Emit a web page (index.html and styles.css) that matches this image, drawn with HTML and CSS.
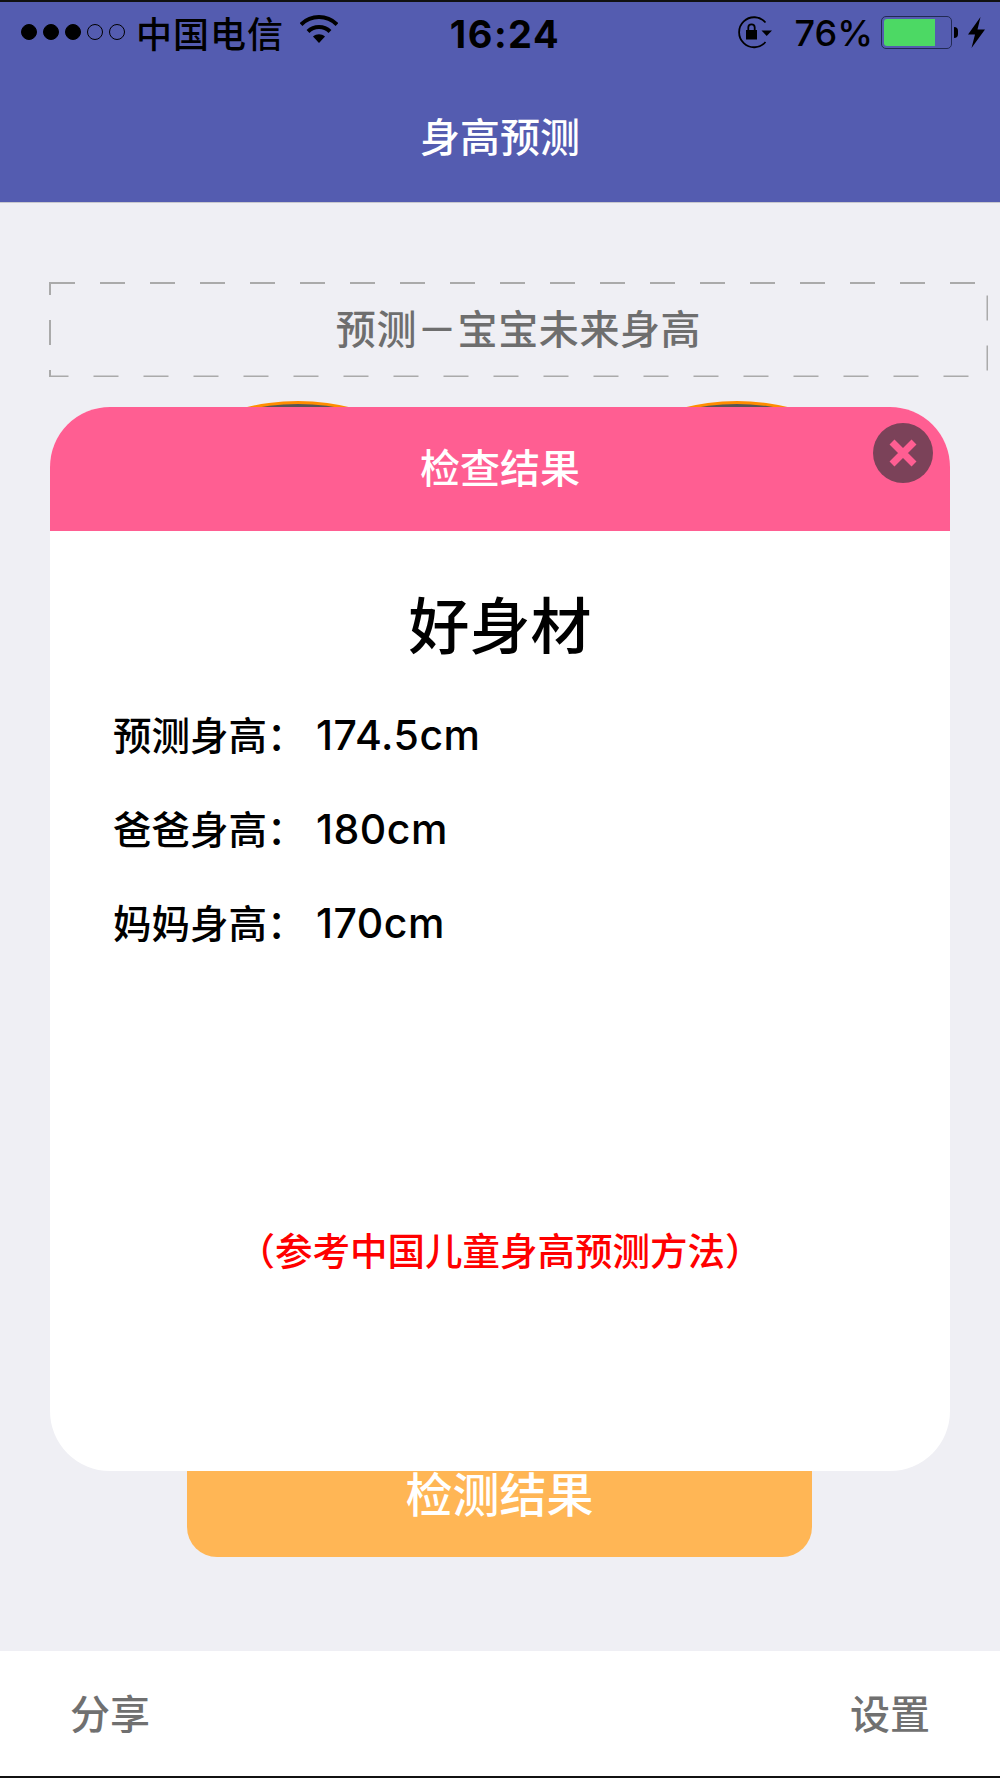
FILE: index.html
```html
<!DOCTYPE html>
<html lang="zh-CN">
<head>
    <meta charset="UTF-8">
    <meta name="viewport" content="width=device-width, initial-scale=1.0">
    <title>身高预测</title>
    <link rel="stylesheet" href="styles.css">
</head>
<body>

<div class="page">
    <div class="topbar">
        <div class="status">
            <div class="status-left">
                <span class="dot on"></span>
                <span class="dot on"></span>
                <span class="dot on"></span>
                <span class="dot"></span>
                <span class="dot"></span>
                <span class="carrier">中国电信</span>
                <svg class="wifi" width="38" height="28" viewBox="0 0 38 28">
                    <path d="M1 9.500C11 -0.500 27 -0.500 37 9.500" fill="none" stroke="#000" stroke-width="4"/>
                    <path d="M8 16.500C14 10.500 24 10.500 30 16.500" fill="none" stroke="#000" stroke-width="4"/>
                    <path d="M13 21.500C16.500 18.500 21.500 18.500 25 21.500L19 28Z" fill="#000"/>
                </svg>
            </div>
            <div class="clock">16:24</div>
            <div class="status-right">
                <svg class="lock" width="37" height="33" viewBox="0 0 37 33">
                    <path d="M29.500 6.500A15 15 0 1 0 29.500 26" fill="none" stroke="#000" stroke-width="1.800"/>
                    <path d="M25.500 14.500H36L30.700 20Z" fill="#000"/>
                    <path d="M10 14H21V23.500H10Z" fill="#000"/>
                    <path d="M12.300 14V11.500A3.200 3.200 0 0 1 18.700 11.500V14" fill="none" stroke="#000" stroke-width="1.800"/>
                </svg>
                <span class="percent">76%</span>
                <div class="battery"><div class="battery-fill"></div></div>
                <span class="battery-nub"></span>
                <svg class="bolt" width="17" height="31" viewBox="0 0 17 31">
                    <path d="M12.500 0L0 17.500H7L3.500 31L17 12.500H9.500Z" fill="#000"/>
                </svg>
            </div>
        </div>
        <h1>身高预测</h1>
    </div>

    <div class="main">
        <div class="banner">
            <svg class="banner-line" width="939" height="95">
                <rect x="1" y="1" width="937.500" height="93.500" fill="none" stroke="#aaa" stroke-width="2" stroke-dasharray="25 25"/>
            </svg>
            预测－宝宝未来身高
        </div>
        <div class="avatars">
            <div class="avatar"></div>
            <div class="avatar"></div>
        </div>
        <div class="check-btn">检测结果</div>
    </div>

    <div class="footer">
        <span>分享</span>
        <span>设置</span>
    </div>

    <div class="modal">
        <div class="modal-head">
            检查结果
            <div class="modal-close">
                <svg width="30" height="30" viewBox="0 0 30 30">
                    <path d="M4 4L26 26M26 4L4 26" stroke="#ff5e92" stroke-width="7"/>
                </svg>
            </div>
        </div>
        <div class="modal-body">
            <div class="result-title">好身材</div>
            <div class="rows">
                <div class="row"><span class="label">预测身高：</span><span class="num">174.5cm</span></div>
                <div class="row"><span class="label">爸爸身高：</span><span class="num">180cm</span></div>
                <div class="row"><span class="label">妈妈身高：</span><span class="num">170cm</span></div>
            </div>
            <div class="note">（参考中国儿童身高预测方法）</div>
        </div>
    </div>
</div>

</body>
</html>
```

FILE: styles.css
```css
/* Basic styling for the page */
body {
    margin: 0;
    font-family: "Noto Sans CJK SC", "Liberation Sans", sans-serif;
    background-color: #efeff4;
}
.page {
    position: relative;
    width: 1000px;
    height: 1778px;
    display: flex;
    flex-direction: column;
    overflow: hidden;
    background-color: #efeff4;
    border-top: 2px solid #111;
    border-bottom: 2px solid #111;
    box-sizing: border-box;
}

/* Top bar */
.topbar {
    height: 200px;
    background-color: #545cb0;
    border-bottom: 1px solid #c8c8ce;
    flex: none;
}
.status {
    display: grid;
    grid-template-columns: 1fr auto 1fr;
    align-items: center;
    height: 60px;
    color: #000;
}
.status-left {
    display: flex;
    align-items: center;
    padding-left: 21px;
}
.dot {
    width: 14px;
    height: 14px;
    margin-right: 6px;
    border: 1px solid #000;
    border-radius: 50%;
}
.dot.on {
    background-color: #000;
}
.carrier {
    margin-left: 5px;
    font-size: 36px;
    font-weight: 500;
    line-height: 44px;
    letter-spacing: 1px;
}
.wifi {
    margin-left: 16px;
    margin-top: -6px;
}
.clock {
    margin-left: 10px;
    margin-top: 3px;
    font-family: Inter, "Liberation Sans", sans-serif;
    font-size: 38px;
    font-weight: 700;
    letter-spacing: 1.500px;
}
.status-right {
    display: flex;
    align-items: center;
    justify-content: flex-end;
    padding-right: 15px;
}
.lock {
    margin-right: 22px;
}
.percent {
    margin-top: 2px;
    margin-right: 8px;
    font-family: Inter, "Liberation Sans", sans-serif;
    font-size: 36px;
    font-weight: 500;
}
.battery {
    width: 65px;
    height: 27px;
    padding: 2px;
    border: 1px solid #222a55;
    border-radius: 5px;
}
.battery-fill {
    width: 51px;
    height: 100%;
    background-color: #4cd964;
    border-radius: 3px 0 0 3px;
}
.battery-nub {
    width: 4px;
    height: 11px;
    margin-left: 2px;
    background-color: #000;
    border-radius: 0 4px 4px 0;
}
.bolt {
    margin-left: 10px;
}
h1 {
    margin: 0;
    height: 140px;
    color: #fff;
    font-size: 40px;
    font-weight: 500;
    line-height: 146px;
    text-align: center;
}

/* Page behind the dialog */
.main {
    flex: 1;
    padding-top: 79px;
}
.banner {
    position: relative;
    width: 939px;
    height: 95px;
    margin-left: 49px;
    color: #6e6e6e;
    font-size: 40px;
    font-weight: 500;
    letter-spacing: 0.600px;
    line-height: 91px;
    text-align: center;
}
.banner-line {
    position: absolute;
    top: 0;
    left: 0;
}
.avatars {
    display: flex;
    gap: 139px;
    margin-top: 24px;
    padding-left: 148px;
}
.avatar {
    width: 300px;
    height: 200px;
    box-sizing: border-box;
    background-color: #555;
    border: 3px solid #ff8c00;
    border-radius: 50%;
}
.check-btn {
    width: 625px;
    height: 124px;
    margin-top: 832px;
    margin-left: 187px;
    background-color: #ffb655;
    border-radius: 0 0 30px 30px;
    color: #fff;
    font-size: 47px;
    font-weight: 500;
    line-height: 118px;
    text-align: center;
}

/* Bottom bar */
.footer {
    flex: none;
    display: flex;
    justify-content: space-between;
    align-items: center;
    height: 125px;
    padding: 0 70px 4px;
    box-sizing: border-box;
    background-color: #fff;
    color: #707070;
    font-size: 40px;
    font-weight: 500;
}

/* Dialog */
.modal {
    position: absolute;
    top: 405px;
    left: 50px;
    width: 900px;
    height: 1064px;
    background-color: #fff;
    border-radius: 60px;
    overflow: hidden;
}
.modal-head {
    position: relative;
    height: 124px;
    background-color: #ff5e92;
    color: #fff;
    font-size: 40px;
    font-weight: 500;
    line-height: 118px;
    text-align: center;
}
.modal-close {
    position: absolute;
    top: 16px;
    right: 17px;
    display: flex;
    justify-content: center;
    align-items: center;
    width: 60px;
    height: 60px;
    background-color: #7b4259;
    border-radius: 50%;
}
.modal-body {
    padding-top: 52px;
}
.result-title {
    color: #000;
    font-size: 61px;
    font-weight: 500;
    line-height: 80px;
    text-align: center;
}
.rows {
    margin-top: 23px;
    padding-left: 63px;
}
.row {
    display: flex;
    align-items: center;
    height: 94px;
    color: #000;
}
.label {
    width: 203px;
    font-size: 38.500px;
    font-weight: 500;
}
.num {
    margin-top: 4px;
    font-family: Inter, "Liberation Sans", sans-serif;
    font-size: 41px;
    font-weight: 500;
    letter-spacing: 0.500px;
}
.note {
    margin-top: 256px;
    color: #f00;
    font-size: 37.500px;
    font-weight: 500;
    line-height: 50px;
    text-align: center;
}
```
